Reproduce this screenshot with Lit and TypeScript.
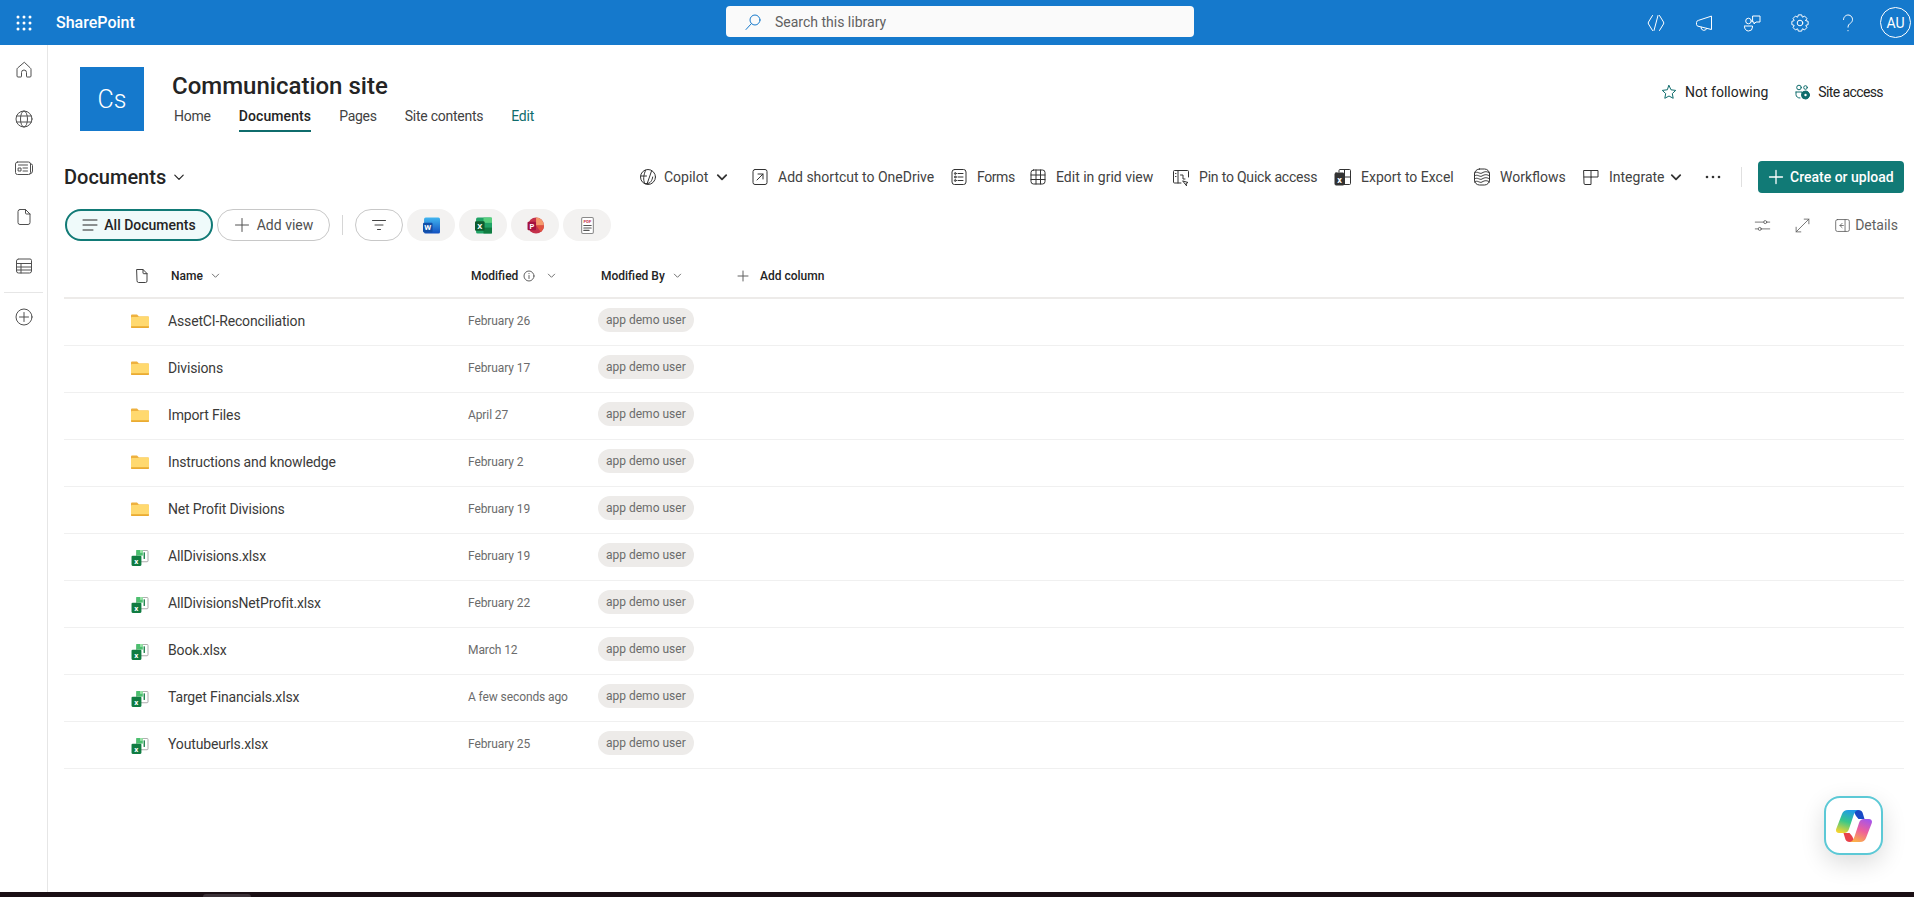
import { LitElement, html, css, TemplateResult } from 'lit';
import { customElement } from 'lit/decorators.js';

// gear outline for the suite bar, easier to compute than to hand write
const gearPath = (() => {
  const pts: string[] = [];
  for (let i = 0; i < 8; i++) {
    const a = (i * Math.PI) / 4;
    const p = (r: number, d: number) =>
      `${(10 + r * Math.cos(a + d)).toFixed(2)} ${(10 + r * Math.sin(a + d)).toFixed(2)}`;
    pts.push(`${i === 0 ? 'M' : 'L'}${p(6.3, -0.38)}`, `L${p(8.3, -0.2)}`, `L${p(8.3, 0.2)}`, `L${p(6.3, 0.38)}`);
  }
  return pts.join(' ') + 'Z';
})();

const chevron = html`<svg class="chev" viewBox="0 0 10 10"><path d="M1.500 3.500 5 7l3.500-3.500"/></svg>`;

const excelFile = html`<svg class="fileicon xl" viewBox="0 0 18 17">
  <rect x="5.500" y="0.500" width="12" height="12" rx="1" fill="#fff" stroke="#a8a8a8" stroke-width="1"/>
  <rect x="5" y="0" width="7" height="6" fill="#4cc06f"/>
  <rect x="9" y="0" width="3" height="3" fill="#9ae2a8"/>
  <rect x="12.800" y="2.500" width="1.400" height="7" fill="#107c41"/>
  <rect x="0" y="6" width="10.500" height="11" rx="1.200" fill="#107c41"/>
  <text x="5.200" y="14.600" text-anchor="middle" font-size="8.500" font-weight="700" fill="#fff">x</text>
</svg>`;

const folder = html`<svg class="fileicon dir" viewBox="0 0 18 15">
  <path d="M0 2a1 1 0 0 1 1-1h5l2 2h9a1 1 0 0 1 1 1v9.500a1 1 0 0 1-1 1H1a1 1 0 0 1-1-1z" fill="#eeb13f"/>
  <path d="M0 4.500a1 1 0 0 1 1-1h5.500L8 3h9a1 1 0 0 1 1 1v8.500a1 1 0 0 1-1 1H1a1 1 0 0 1-1-1z" fill="#ffd96f"/>
  <rect x="0" y="12.800" width="18" height="1.500" rx="0.700" fill="#e9a92f"/>
</svg>`;

interface Row {
  name: string;
  modified: string;
  folder?: boolean;
}

const rows: Row[] = [
  { name: 'AssetCI-Reconciliation', modified: 'February 26', folder: true },
  { name: 'Divisions', modified: 'February 17', folder: true },
  { name: 'Import Files', modified: 'April 27', folder: true },
  { name: 'Instructions and knowledge', modified: 'February 2', folder: true },
  { name: 'Net Profit Divisions', modified: 'February 19', folder: true },
  { name: 'AllDivisions.xlsx', modified: 'February 19' },
  { name: 'AllDivisionsNetProfit.xlsx', modified: 'February 22' },
  { name: 'Book.xlsx', modified: 'March 12' },
  { name: 'Target Financials.xlsx', modified: 'A few seconds ago' },
  { name: 'Youtubeurls.xlsx', modified: 'February 25' },
];

interface Command {
  label: string;
  width: number; // label box, the reference font runs a little narrower
  space: number; // distance from the previous command
  track?: number;
  caret?: boolean;
  icon: TemplateResult;
}

const commands: Command[] = [
  {
    label: 'Copilot',
    width: 46,
    space: 0,
    caret: true,
    icon: html`<svg viewBox="-2 0 20 20"><circle cx="10" cy="10" r="7.500"/><path d="M7.500 3.500C5.500 8 5 13 6.800 16.500h2.400C11 12.500 12 7.500 13.500 4M9.200 16.500c3 .3 5-3 5.500-6.500M3 9h5.500"/></svg>`,
  },
  {
    label: 'Add shortcut to OneDrive',
    width: 158,
    space: 22,
    icon: html`<svg viewBox="0 0 20 20"><rect x="3" y="2.500" width="14" height="15" rx="2"/><path d="M8 7h5v5M13 7l-6 6"/></svg>`,
  },
  {
    label: 'Forms',
    width: 37,
    space: 13,
    track: -0.4,
    icon: html`<svg viewBox="0 0 20 20"><rect x="3" y="2.500" width="14" height="15" rx="2.500"/><path d="M9 6.500h5M9 10h5M9 13.500h5"/><circle cx="6.300" cy="6.500" r=".9"/><circle cx="6.300" cy="10" r=".9"/><circle cx="6.300" cy="13.500" r=".9"/></svg>`,
  },
  {
    label: 'Edit in grid view',
    width: 99,
    space: 14,
    icon: html`<svg viewBox="0 0 20 20"><rect x="3" y="3" width="14" height="14" rx="2.500"/><path d="M3 8h14M3 12.500h14M8 3v14M12.500 3v14"/></svg>`,
  },
  {
    label: 'Pin to Quick access',
    width: 118,
    space: 16,
    track: -0.2,
    icon: html`<svg viewBox="0 0 20 20"><path d="M10 16H3.500a1 1 0 0 1-1-1V4.500a1 1 0 0 1 1-1h13a1 1 0 0 1 1 1V10M7 3.500V16M4.500 6.500h.5M4.500 9.500h.5M9.500 8h2.500v4h2M12 14l5 1.500-2 1 .5 2z"/></svg>`,
  },
  {
    label: 'Export to Excel',
    width: 91,
    space: 16,
    icon: html`<svg viewBox="0 0 20 20"><path d="M6 5V3.500a1 1 0 0 1 1-1h9.500a1 1 0 0 1 1 1v13a1 1 0 0 1-1 1H7M11.500 2.500V17.500M6 10h11.500"/><rect x="2" y="6" width="9" height="12" rx="1" fill="#333"/><text x="6.500" y="15.500" text-anchor="middle" font-size="9" font-weight="700" fill="#fff" stroke="none">x</text></svg>`,
  },
  {
    label: 'Workflows',
    width: 65,
    space: 20,
    icon: html`<svg viewBox="0 0 20 20"><rect x="2.500" y="2" width="15" height="16" rx="5"/><path d="M2.500 6c3-2.500 5 1.500 7.500 0s5-2 7.500 0M2.500 9c3-2.500 5 1.500 7.500 0s5-2 7.500 0M2.500 12c3-2.500 5 1.500 7.500 0s5-2 7.500 0M2.500 15c3-2.500 5 1.500 7.500 0s5-2 7.500 0"/></svg>`,
  },
  {
    label: 'Integrate',
    width: 55,
    space: 16,
    caret: true,
    icon: html`<svg viewBox="0 0 20 20"><path d="M3 3.500h14v6.500h-7v7.500H4a1 1 0 0 1-1-1zM3 10h7M10 3.500V10"/></svg>`,
  },
];

@customElement('app-root')
export class AppRoot extends LitElement {
  static styles = css`
    :host {
      display: block;
      position: relative;
      height: 897px;
      overflow: hidden;
      background: #fff;
      color: #242424;
      font-family: Roboto, 'Liberation Sans', sans-serif;
      font-size: 14px;
    }

    svg {
      display: block;
      flex: none;
      width: 20px;
      height: 20px;
      fill: none;
      stroke: currentColor;
      stroke-width: 1;
      stroke-linecap: round;
      stroke-linejoin: round;
    }

    .page {
      display: flex;
      flex-direction: column;
      height: 100%;
    }

    /* suite bar */
    .suite {
      flex: none;
      display: flex;
      align-items: center;
      position: relative;
      height: 45px;
      background: #1579cc;
      color: #fff;
    }
    .waffle {
      width: 16px;
      height: 16px;
      margin-left: 16px;
      stroke: none;
      fill: #fff;
    }
    .brand {
      margin-left: 24px;
      font-size: 16px;
      font-weight: 500;
    }
    .search {
      position: absolute;
      left: 726px;
      top: 6px;
      width: 468px;
      height: 31px;
      box-sizing: border-box;
      display: flex;
      align-items: center;
      gap: 12px;
      padding-left: 17px;
      background: #fafafa;
      border-radius: 4px;
      color: #616161;
    }
    .search svg {
      color: #1579cc;
    }
    .suite-icons {
      margin-left: auto;
      display: flex;
      align-items: center;
      gap: 28px;
      padding-right: 3px;
    }
    .avatar {
      width: 31px;
      height: 31px;
      margin-left: -6px;
      box-sizing: border-box;
      border: 1px solid #fff;
      border-radius: 50%;
      display: flex;
      align-items: center;
      justify-content: center;
      font-size: 14px;
    }

    .body {
      flex: 1;
      display: flex;
      min-height: 0;
    }

    /* left rail */
    .rail {
      flex: none;
      width: 48px;
      box-sizing: border-box;
      border-right: 1px solid #e6e6e6;
      display: flex;
      flex-direction: column;
      align-items: center;
      padding-top: 15px;
      color: #505050;
    }
    .rail svg {
      margin-bottom: 29px;
    }
    .rail hr {
      width: 39px;
      margin: -13px 0 14px;
      border: 0;
      border-top: 1px solid #e6e6e6;
    }

    .main {
      flex: 1;
      min-width: 0;
      display: flex;
      flex-direction: column;
    }

    /* site header */
    .site {
      flex: none;
      height: 116px;
      box-sizing: border-box;
      display: flex;
      align-items: flex-start;
      padding: 22px 31px 0 32px;
    }
    .logo {
      width: 64px;
      height: 64px;
      background: #1579cc;
      color: #fff;
      font-size: 25px;
      font-weight: 300;
      display: flex;
      align-items: center;
      justify-content: center;
    }
    .site-info {
      margin: 3px 0 0 28px;
    }
    .site-title {
      font-size: 24px;
      font-weight: 500;
      line-height: 32px;
    }
    .site-nav {
      display: flex;
      gap: 28px;
      margin: 4px 0 0 2px;
      color: #424242;
      letter-spacing: -0.25px;
    }
    .site-nav span {
      line-height: 20px;
      padding-bottom: 4px;
      border-bottom: 2px solid transparent;
    }
    .site-nav .on {
      color: #242424;
      font-weight: 500;
      letter-spacing: 0.1px;
      border-bottom-color: #0f6c6c;
    }
    .site-nav .edit {
      color: #0f6c6c;
    }
    .site-actions {
      margin: 15px 0 0 auto;
      display: flex;
      align-items: center;
      gap: 26px;
      line-height: 20px;
    }
    .site-actions > div {
      display: flex;
      align-items: center;
      gap: 8px;
    }
    .site-actions svg {
      width: 16px;
      height: 16px;
      color: #0f6c6c;
    }
    .site-actions .tight {
      letter-spacing: -0.6px;
    }

    /* command row */
    .commands {
      flex: none;
      height: 32px;
      display: flex;
      align-items: center;
      padding: 0 10px 0 16px;
    }
    .lib-title {
      display: flex;
      align-items: center;
      gap: 7px;
      font-size: 20px;
      font-weight: 500;
    }
    .lib-title .chev {
      width: 12px;
      height: 12px;
    }
    .cmds {
      margin-left: auto;
      display: flex;
      align-items: center;
      color: #424242;
    }
    .cmd {
      display: flex;
      align-items: center;
      gap: 8px;
    }
    .cmd svg {
      color: #333;
    }
    .cmd span {
      white-space: nowrap;
    }
    .cmd .chev {
      width: 12px;
      height: 12px;
      stroke-width: 1.500;
      margin-left: -2px;
    }
    .dots {
      margin-left: 21px;
      stroke: none;
      fill: #333;
    }
    .cmd-sep {
      width: 1px;
      height: 20px;
      background: #e0e0e0;
      margin: 0 16px 0 18px;
    }
    .create {
      display: flex;
      align-items: center;
      gap: 6px;
      width: 146px;
      height: 32px;
      box-sizing: border-box;
      padding-left: 10px;
      border-radius: 4px;
      background: #117a76;
      color: #fff;
      font-weight: 500;
    }
    .create svg {
      width: 16px;
      height: 16px;
      stroke-width: 1.300;
    }

    /* view pills */
    .views {
      flex: none;
      height: 32px;
      margin-top: 16px;
      display: flex;
      align-items: center;
      padding: 0 16px 0 17px;
    }
    .pill {
      height: 32px;
      box-sizing: border-box;
      display: flex;
      align-items: center;
      justify-content: center;
      border: 1px solid #c8c8c8;
      border-radius: 16px;
      color: #424242;
    }
    .pill svg {
      width: 16px;
      height: 16px;
    }
    .pill.all {
      width: 148px;
      gap: 6px;
      border: 2px solid #117a76;
      background: #effafa;
      color: #242424;
      font-weight: 500;
    }
    .pill.add {
      width: 113px;
      gap: 7px;
      margin-left: 4px;
      color: #505050;
    }
    .view-sep {
      width: 1px;
      height: 20px;
      background: #d6d6d6;
      margin: 0 12px;
    }
    .pill.filter {
      width: 48px;
    }
    .pill.type {
      width: 48px;
      margin-left: 4px;
      border: 0;
      background: #f3f2f1;
    }
    .pill.type svg {
      width: 17px;
      height: 17px;
      stroke: none;
    }
    .view-tools {
      margin-left: auto;
      display: flex;
      align-items: center;
      color: #616161;
      gap: 23px;
    }
    .view-tools svg {
      width: 17px;
      height: 17px;
    }
    .details {
      display: flex;
      align-items: center;
      gap: 4px;
    }

    /* list */
    .list {
      margin: 13px 10px 0 16px;
    }
    .list-head,
    .list-row {
      display: grid;
      grid-template-columns: 37px 300px 130px 137px 1fr;
      align-items: center;
      padding-left: 67px;
    }
    .list-head {
      height: 45px;
      box-sizing: border-box;
      border-bottom: 2px solid #edebe9;
      font-size: 12px;
      font-weight: 500;
    }
    .list-head > div {
      display: flex;
      align-items: center;
      gap: 8px;
      padding-left: 3px;
    }
    .list-head svg {
      width: 16px;
      height: 16px;
      color: #424242;
    }
    .list-head .chev {
      width: 9px;
      height: 9px;
      color: #616161;
    }
    .list-head .info {
      width: 12px;
      height: 12px;
      color: #616161;
      margin-left: -3px;
    }
    .list-head .info + .chev {
      margin-left: 4px;
    }
    .list-head .addcol {
      padding-left: 2px;
      gap: 11px;
    }
    .list-head .addcol svg {
      width: 12px;
      height: 12px;
      color: #616161;
    }
    .list-row {
      height: 47px;
      box-sizing: border-box;
      border-bottom: 1px solid #f0f0f0;
    }
    .fileicon {
      width: 18px;
      height: 16px;
      stroke: none;
    }
    .fileicon.dir {
      margin-bottom: 2px;
    }
    .fileicon.xl {
      margin-top: 2px;
    }
    .name {
      margin-bottom: 2px;
      color: #3b3a39;
      letter-spacing: -0.15px;
    }
    .modified {
      font-size: 12px;
      color: #6b6b6b;
      margin-bottom: 2px;
      letter-spacing: -0.1px;
    }
    .by {
      justify-self: start;
      height: 24px;
      box-sizing: border-box;
      padding: 0 8px;
      margin-bottom: 4px;
      border-radius: 12px;
      background: #edebe9;
      color: #6b6b6b;
      font-size: 12px;
      line-height: 24px;
    }

    /* floating copilot button */
    .fab {
      position: absolute;
      left: 1824px;
      top: 796px;
      width: 59px;
      height: 59px;
      box-sizing: border-box;
      border: 2px solid #5cc9d6;
      border-radius: 16px;
      background: #fff;
      box-shadow: 0 8px 24px rgba(0, 0, 0, 0.14);
      display: flex;
      align-items: center;
      justify-content: center;
    }
    .fab svg {
      width: 36px;
      height: 32px;
      stroke: none;
    }

    .taskbar {
      flex: none;
      height: 5px;
      background: #1a0f14;
      position: relative;
    }
    .taskbar i {
      position: absolute;
      left: 203px;
      top: 2px;
      width: 48px;
      height: 3px;
      border-radius: 3px 3px 0 0;
      background: #3c3238;
    }
  `;

  private _renderCommands() {
    return html`
      <div class="cmds">
        ${commands.map(
          (c) => html`
            <div class="cmd" style="margin-left:${c.space}px">
              ${c.icon}
              <span style="width:${c.width}px;letter-spacing:${c.track ?? 0}px">${c.label}</span>
              ${c.caret ? chevron : null}
            </div>
          `
        )}
        <svg class="dots" viewBox="0 0 20 20"><circle cx="4" cy="10" r="1.300"/><circle cx="10" cy="10" r="1.300"/><circle cx="16" cy="10" r="1.300"/></svg>
        <div class="cmd-sep"></div>
        <div class="create">
          <svg viewBox="0 0 16 16"><path d="M8 1.500v13M1.500 8h13"/></svg>
          <span>Create or upload</span>
        </div>
      </div>
    `;
  }

  private _renderViews() {
    return html`
      <div class="views">
        <div class="pill all">
          <svg viewBox="0 0 16 16"><path d="M1 3h14M1 8h14M1 13h10"/></svg>
          <span>All Documents</span>
        </div>
        <div class="pill add">
          <svg viewBox="0 0 16 16"><path d="M8 1.500v13M1.500 8h13"/></svg>
          <span>Add view</span>
        </div>
        <div class="view-sep"></div>
        <div class="pill filter">
          <svg viewBox="0 0 16 16"><path d="M1.500 3.500h13M4 8h8M6.500 12.500h3"/></svg>
        </div>
        <div class="pill type">
          <svg viewBox="0 0 16 16">
            <defs><linearGradient id="wd" x1="0" y1="0" x2="0" y2="1"><stop offset="0" stop-color="#41b6f0"/><stop offset="1" stop-color="#1350c0"/></linearGradient></defs>
            <rect x="1" y="0.500" width="15" height="15" rx="1.500" fill="url(#wd)"/>
            <rect x="0" y="5.500" width="9" height="9" rx="1" fill="#124fa8"/>
            <text x="4.500" y="12.500" text-anchor="middle" font-size="7.500" font-weight="700" fill="#fff">W</text>
          </svg>
        </div>
        <div class="pill type">
          <svg viewBox="0 0 16 16">
            <rect x="1" y="0.500" width="15" height="15" rx="1.500" fill="#21a366"/>
            <rect x="8" y="0.500" width="8" height="5" fill="#59cf7f"/>
            <rect x="8" y="10" width="8" height="5.500" fill="#107c41"/>
            <rect x="0" y="4" width="9" height="9" rx="1" fill="#0e5c2f"/>
            <text x="4.500" y="11" text-anchor="middle" font-size="7.500" font-weight="700" fill="#fff">X</text>
          </svg>
        </div>
        <div class="pill type">
          <svg viewBox="0 0 16 16">
            <circle cx="8.500" cy="8" r="7.500" fill="#c4314b"/>
            <path d="M8.500 .5a7.500 7.500 0 0 1 7.500 7.500H8.500z" fill="#f59a6c"/>
            <path d="M8.500 8H16a7.500 7.500 0 0 1-3 6z" fill="#e0523f"/>
            <rect x="0.500" y="4.500" width="8" height="8" rx="1" fill="#a4123f"/>
            <text x="4.500" y="11" text-anchor="middle" font-size="7" font-weight="700" fill="#fff">P</text>
          </svg>
        </div>
        <div class="pill type">
          <svg viewBox="0 0 16 16">
            <rect x="2.500" y="0.500" width="11" height="15" rx="1.200" fill="#fff" stroke="#8a8a8a"/>
            <text x="8" y="5.500" text-anchor="middle" font-size="4" font-weight="700" fill="#c4314b">PDF</text>
            <path d="M4.500 8h7M4.500 10.300h7M4.500 12.600h5" stroke="#555"/>
          </svg>
        </div>
        <div class="view-tools">
          <svg viewBox="0 0 20 20"><path d="M1.500 6h10M15 6h3.500M1.500 14h3.500M8.500 14h10"/><circle cx="13.200" cy="6" r="1.800"/><circle cx="6.800" cy="14" r="1.800"/></svg>
          <svg viewBox="0 0 20 20"><path d="M12 2.500h5.500V8M17.500 2.500l-15 15M2.500 12v5.500H8"/></svg>
          <div class="details">
            <svg viewBox="0 0 20 20"><rect x="2" y="3" width="16" height="14" rx="2"/><path d="M13 3v14M9.500 7.500 7 10l2.500 2.500M7 10h4"/></svg>
            <span>Details</span>
          </div>
        </div>
      </div>
    `;
  }

  private _renderList() {
    return html`
      <div class="list">
        <div class="list-head">
          <div><svg viewBox="0 0 16 16"><path d="M3 1.500h6l4 4V13a1.500 1.500 0 0 1-1.500 1.500h-7A1.500 1.500 0 0 1 3 13zM9 1.500V5a.7.7 0 0 0 .7.7H13"/></svg></div>
          <div>Name ${chevron}</div>
          <div>Modified
            <svg class="info" viewBox="0 0 12 12"><circle cx="6" cy="6" r="5"/><path d="M6 5.500v3M6 3.500v.2"/></svg>
            ${chevron}
          </div>
          <div>Modified By ${chevron}</div>
          <div class="addcol">
            <svg viewBox="0 0 12 12"><path d="M6 1v10M1 6h10"/></svg>
            Add column
          </div>
        </div>
        ${rows.map(
          (row) => html`
            <div class="list-row">
              ${row.folder ? folder : excelFile}
              <div class="name">${row.name}</div>
              <div class="modified">${row.modified}</div>
              <div class="by">app demo user</div>
            </div>
          `
        )}
      </div>
    `;
  }

  render() {
    return html`
      <div class="page">
        <header class="suite">
          <svg class="waffle" viewBox="0 0 16 16">
            <circle cx="2" cy="2" r="1.500"/><circle cx="8" cy="2" r="1.500"/><circle cx="14" cy="2" r="1.500"/>
            <circle cx="2" cy="8" r="1.500"/><circle cx="8" cy="8" r="1.500"/><circle cx="14" cy="8" r="1.500"/>
            <circle cx="2" cy="14" r="1.500"/><circle cx="8" cy="14" r="1.500"/><circle cx="14" cy="14" r="1.500"/>
          </svg>
          <div class="brand">SharePoint</div>
          <div class="search">
            <svg viewBox="0 0 20 20"><circle cx="12" cy="8" r="5"/><path d="M8.300 11.700 3 17.500"/></svg>
            <span>Search this library</span>
          </div>
          <div class="suite-icons">
            <svg viewBox="0 0 20 20"><path d="M6.500 2.500 2.500 9a2 2 0 0 0 0 2l4 6.500M13.500 2.500l4 6.500a2 2 0 0 1 0 2l-4 6.500M12 2.500 8 17.500"/></svg>
            <svg viewBox="0 0 20 20"><path d="M17.500 3.500v13L4 13.200a2 2 0 0 1-1.500-1.900V9.500A2 2 0 0 1 4 7.500zM7 14a3 3 0 0 0 5.800 1.400"/></svg>
            <svg viewBox="0 0 20 20"><circle cx="6.500" cy="8" r="2.800"/><path d="M2.500 13h8v1a4 4 0 0 1-8 0zM11 3h7v6h-4l-2 2V9h-1z"/></svg>
            <svg viewBox="0 0 20 20"><path d=${gearPath}/><circle cx="10" cy="10" r="2.800"/></svg>
            <svg viewBox="0 0 20 20"><path d="M5.500 6.500a4.500 4.500 0 1 1 7 3.700c-1.500 1-2.500 2-2.500 4M10 17.500v.3"/></svg>
            <div class="avatar">AU</div>
          </div>
        </header>

        <div class="body">
          <nav class="rail">
            <svg viewBox="0 0 20 20"><path d="M10 2.500 3.600 8a1.800 1.800 0 0 0-.6 1.300V16a1 1 0 0 0 1 1h3a.5.5 0 0 0 .5-.5v-4a2.500 2.500 0 0 1 5 0v4a.5.5 0 0 0 .5.5h3a1 1 0 0 0 1-1V9.300a1.800 1.800 0 0 0-.6-1.300z"/></svg>
            <svg viewBox="0 0 20 20"><circle cx="10" cy="10" r="8"/><ellipse cx="10" cy="10" rx="3.500" ry="8"/><path d="M2.500 7h15M2.500 13h15"/></svg>
            <svg viewBox="0 0 20 20"><rect x="1.500" y="4" width="15" height="12.500" rx="2"/><path d="M16.500 6h.5a1.500 1.500 0 0 1 1.500 1.500v5.500a3 3 0 0 1-2.500 3M4.500 7h9M9 10h4.500M9 13h4.500"/><rect x="4.500" y="10" width="2.500" height="3"/></svg>
            <svg viewBox="0 0 20 20"><path d="M6 2.500h5.500L16 7v8.500a2 2 0 0 1-2 2H6a2 2 0 0 1-2-2v-11a2 2 0 0 1 2-2zM11.500 2.500V6a1 1 0 0 0 1 1H16"/></svg>
            <svg viewBox="0 0 20 20"><path d="M5 3h11a1.500 1.500 0 0 1 1.500 1.500v10.500a2 2 0 0 1-2 2h-11a2 2 0 0 1-2-2V5a2 2 0 0 1 2-2zM2.500 7.500h15M2.500 11h15M2.500 14h15M7 7.500V17"/></svg>
            <hr />
            <svg viewBox="0 0 20 20"><circle cx="10" cy="10" r="8"/><path d="M10 5.500v9M5.500 10h9"/></svg>
          </nav>

          <main class="main">
            <section class="site">
              <div class="logo">Cs</div>
              <div class="site-info">
                <div class="site-title">Communication site</div>
                <div class="site-nav">
                  <span>Home</span>
                  <span class="on">Documents</span>
                  <span>Pages</span>
                  <span>Site contents</span>
                  <span class="edit">Edit</span>
                </div>
              </div>
              <div class="site-actions">
                <div>
                  <svg viewBox="0 0 16 16"><path d="m8 1.500 2 4.300 4.700.6-3.400 3.200.9 4.700L8 12l-4.200 2.300.9-4.700L1.300 6.400 6 5.800z"/></svg>
                  <span>Not following</span>
                </div>
                <div>
                  <svg viewBox="0 0 16 16"><circle cx="5" cy="3.500" r="2.300"/><circle cx="11.500" cy="3.500" r="1.800"/><path d="M2 8h6v1M2 8v2.500A3.500 3.500 0 0 0 6 14"/><circle cx="11.500" cy="11" r="4" fill="#0f6c6c"/><circle cx="11.500" cy="11" r="1.200" fill="#fff" stroke="none"/></svg>
                  <span class="tight">Site access</span>
                </div>
              </div>
            </section>

            <section class="commands">
              <div class="lib-title">Documents ${chevron}</div>
              ${this._renderCommands()}
            </section>

            ${this._renderViews()}
            ${this._renderList()}
          </main>
        </div>

        <div class="taskbar"><i></i></div>
      </div>

      <div class="fab">
        <svg viewBox="0 0 36 32">
          <defs>
            <linearGradient id="cpa" x1="0.600" y1="0" x2="0.300" y2="1">
              <stop offset="0" stop-color="#1f9ae8"/>
              <stop offset="0.500" stop-color="#38c88a"/>
              <stop offset="1" stop-color="#f2d32f"/>
            </linearGradient>
            <linearGradient id="cpb" x1="0.300" y1="1" x2="0.700" y2="0">
              <stop offset="0" stop-color="#a855e8"/>
              <stop offset="0.500" stop-color="#ee5f9a"/>
              <stop offset="1" stop-color="#fbb04a"/>
            </linearGradient>
          </defs>
          <path d="M17 0h5c3 0 4.500 1.500 5 4l1.500 5h-6L20 6z" fill="#1849c6"/>
          <path d="M19 32h-5c-3 0-4.500-1.500-5-4l-1.500-5h6l2.500 3z" fill="#e8424a"/>
          <path d="M6 4C7 1.500 9 0 12 0h10c-2.500.5-3.500 2.500-4.500 5.500L13 19c-.8 2.800-2.500 4-5 4H3c-2.200 0-3.500-1.800-2.800-4z" fill="url(#cpa)"/>
          <path d="M6 4C7 1.500 9 0 12 0h10c-2.500.5-3.500 2.500-4.500 5.500L13 19c-.8 2.800-2.500 4-5 4H3c-2.200 0-3.500-1.800-2.800-4z" fill="url(#cpb)" transform="rotate(180 18 16)"/>
        </svg>
      </div>
    `;
  }
}
